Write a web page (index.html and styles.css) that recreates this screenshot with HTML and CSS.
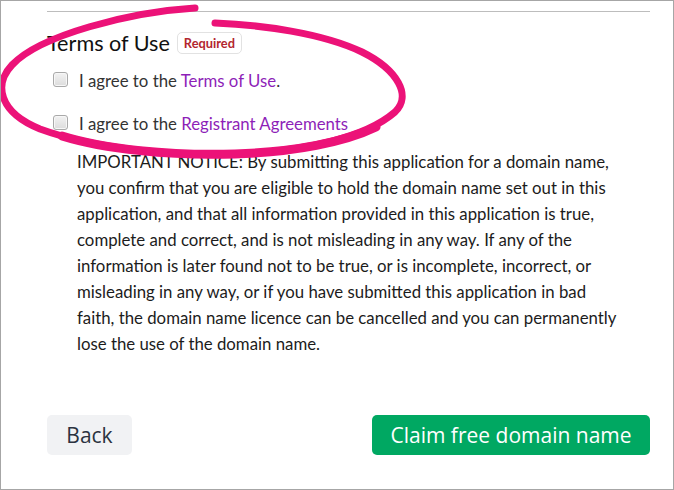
FILE: index.html
```html
<!DOCTYPE html>
<html lang="en">
<head>
<meta charset="utf-8">
<title>Terms of Use</title>
<link rel="stylesheet" href="styles.css">
</head>
<body>
<div class="frame">
  <div class="rule"></div>
  <div class="section-head">
    <h2 class="section-title">Terms of Use</h2>
    <span class="badge">Required</span>
  </div>
  <label class="check-row row-first">
    <input type="checkbox" class="check">
    <span class="check-label">I agree to the <a class="link" href="#">Terms of Use</a>.</span>
  </label>
  <label class="check-row row-second">
    <input type="checkbox" class="check">
    <span class="check-label">I agree to the <a class="link" href="#">Registrant Agreements</a></span>
  </label>
  <p class="notice">IMPORTANT NOTICE: By submitting this application for a domain name, you confirm that you are eligible to hold the domain name set out in this application, and that all information provided in this application is true, complete and correct, and is not misleading in any way. If any of the information is later found not to be true, or is incomplete, incorrect, or misleading in any way, or if you have submitted this application in bad faith, the domain name licence can be cancelled and you can permanently lose the use of the domain name.</p>
  <div class="actions">
    <button class="btn btn-back" type="button">Back</button>
    <button class="btn btn-primary" type="button">Claim free domain name</button>
  </div>
  <svg class="annotation" width="674" height="490" viewBox="0 0 674 490" aria-hidden="true">
    <path d="M195,8 C130,12 40,35 12,65 C-6,84 -2,112 40,129 C92,148 170,156 235,154 C305,151 365,138 395,112 C412,96 398,70 362,52 C322,33 262,25 215,23" fill="none" stroke="#ec1278" stroke-width="7" stroke-linecap="round"/>
    <path d="M62,136 C104,149 170,156 235,154 C295,152 345,142 376,127" fill="none" stroke="#ec1278" stroke-width="9" stroke-linecap="round"/>
  </svg>
</div>
</body>
</html>
```

FILE: styles.css
```css
html, body {
  margin: 0;
  padding: 0;
  background: #ffffff;
}

.frame {
  position: relative;
  width: 674px;
  height: 490px;
  box-sizing: border-box;
  border: 1px solid #a6a6a6;
  padding: 10px 23px 0 46px;
  overflow: hidden;
  font-family: Lato, "Noto Sans", sans-serif;
  color: #222;
}

.rule {
  height: 1px;
  background: #bdbdbd;
}

.section-head {
  display: flex;
  align-items: center;
  gap: 7px;
  margin-top: 19px;
  height: 24px;
}

.section-title {
  margin: 0;
  font-size: 21.6px;
  font-weight: 400;
  line-height: 24px;
  color: #111;
}

.badge {
  display: inline-block;
  box-sizing: border-box;
  height: 22px;
  padding: 0 6px;
  border: 1px solid #e2e2e2;
  border-radius: 5px;
  font-size: 12.8px;
  font-weight: 700;
  line-height: 20px;
  color: #b3262f;
  background: #fff;
}

.check-row {
  display: flex;
  align-items: center;
  gap: 11px;
  padding-left: 6px;
  height: 22px;
  font-size: 16.8px;
  color: #333;
}

.row-first {
  margin-top: 15px;
}

.row-second {
  margin-top: 21px;
}

.check {
  appearance: none;
  -webkit-appearance: none;
  margin: 0;
  width: 15px;
  height: 15px;
  box-sizing: border-box;
  border: 1px solid #a9a9a9;
  border-radius: 3px;
  background: linear-gradient(#f2f2f2, #dcdcdc);
  box-shadow: inset 0 0 0 1px #f7f7f7;
  position: relative;
  top: -2px;
}

.check-label {
  line-height: 22px;
}

.link {
  color: #8e1fb8;
  text-decoration: none;
}

.notice {
  margin: 14px 0 0 30px;
  padding-right: 25px;
  font-size: 16.8px;
  line-height: 26px;
  color: #1c1c1c;
}

.actions {
  display: flex;
  justify-content: space-between;
  margin-top: 58px;
}

.btn {
  height: 40px;
  border: none;
  border-radius: 5px;
  font-family: "Open Sans", "Noto Sans", sans-serif;
  font-size: 21px;
  padding: 0 10px;
  cursor: pointer;
}

.btn-back {
  width: 85px;
  background: #f1f2f4;
  color: #2b3340;
}

.btn-primary {
  width: 278px;
  background: #00a862;
  color: #ffffff;
}

.annotation {
  position: absolute;
  left: -1px;
  top: -1px;
  pointer-events: none;
}
```
